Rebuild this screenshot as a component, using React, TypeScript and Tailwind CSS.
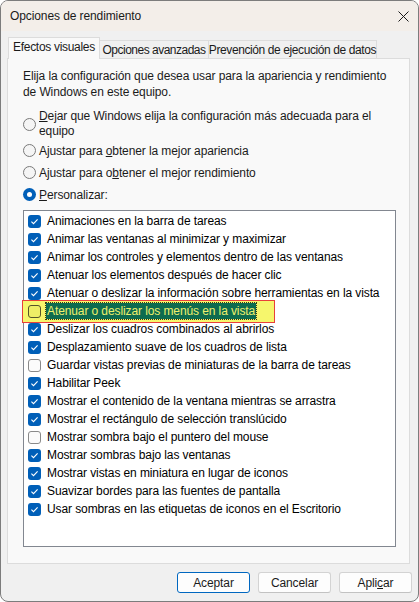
import * as React from "react";

const font = { fontFamily: '"Liberation Sans", Arial, sans-serif', letterSpacing: "-0.1px" };

const items: [string, boolean][] = [
  ["Animaciones en la barra de tareas", true],
  ["Animar las ventanas al minimizar y maximizar", true],
  ["Animar los controles y elementos dentro de las ventanas", true],
  ["Atenuar los elementos después de hacer clic", true],
  ["Atenuar o deslizar la información sobre herramientas en la vista", true],
  ["Atenuar o deslizar los menús en la vista", false],
  ["Deslizar los cuadros combinados al abrirlos", true],
  ["Desplazamiento suave de los cuadros de lista", true],
  ["Guardar vistas previas de miniaturas de la barra de tareas", false],
  ["Habilitar Peek", true],
  ["Mostrar el contenido de la ventana mientras se arrastra", true],
  ["Mostrar el rectángulo de selección translúcido", true],
  ["Mostrar sombra bajo el puntero del mouse", false],
  ["Mostrar sombras bajo las ventanas", true],
  ["Mostrar vistas en miniatura en lugar de iconos", true],
  ["Suavizar bordes para las fuentes de pantalla", true],
  ["Usar sombras en las etiquetas de iconos en el Escritorio", true],
];

const Check = ({ on, hl }: { on: boolean; hl?: boolean }) =>
  on ? (
    <span className="w-[13px] h-[13px] rounded-[3px] bg-[#005fb8] flex items-center justify-center shrink-0">
      <svg width="13" height="13" viewBox="0 0 13 13">
        <path d="M3.4 6.7 L5.5 8.7 L9.6 4.4" fill="none" stroke="#fff" strokeWidth="1.1" />
      </svg>
    </span>
  ) : (
    <span
      className={
        "block w-[13px] h-[13px] rounded-[3px] border shrink-0 " +
        (hl ? "border-[#55552a] bg-[#eeee66]" : "border-[#8a8a8a] bg-[#fbfbfb]")
      }
    />
  );

const Radio = ({ on }: { on?: boolean }) =>
  on ? (
    <span className="w-[13px] h-[13px] rounded-full bg-[#005fb8] flex items-center justify-center shrink-0">
      <span className="w-[5px] h-[5px] rounded-full bg-white" />
    </span>
  ) : (
    <span className="w-[13px] h-[13px] rounded-full border border-[#7a7a7a] bg-[#f5f5f5] shrink-0" />
  );

export default function App() {
  return (
    <div
      className="w-[419px] h-[602px] bg-[#f0f0f0] border border-[#7c7c7c] rounded-[8px] overflow-hidden flex flex-col text-[12px] text-[#1b1b1b] whitespace-nowrap"
      style={font}
    >
      <div className="h-[30px] bg-[#f3eee9] flex items-center justify-between pl-[9px] pr-[9px] shrink-0">
        <span className="text-[12px] text-[#1a1a1a]">Opciones de rendimiento</span>
        <svg width="11" height="11" viewBox="0 0 11 11">
          <path d="M0.5 0.5 L10.5 10.5 M10.5 0.5 L0.5 10.5" stroke="#1a1a1a" strokeWidth="1" />
        </svg>
      </div>

      <div className="flex items-end pt-[6px] pl-[7px] shrink-0 relative z-10">
        <div className="w-[92px] h-[22px] bg-[#f9f9f9] border border-b-0 border-[#dcdcdc] flex items-center justify-center pb-[3px] -mb-px leading-none tracking-[-0.3px]">
          Efectos visuales
        </div>
        <div className="w-[109px] h-[18px] bg-[#f0f0f0] border border-l-0 border-b-0 border-[#dcdcdc] flex items-center justify-center leading-none tracking-[-0.5px]">
          Opciones avanzadas
        </div>
        <div className="w-[168px] h-[18px] bg-[#f0f0f0] border border-l-0 border-b-0 border-[#dcdcdc] flex items-center justify-center leading-none tracking-[-0.4px]">
          Prevención de ejecución de datos
        </div>
      </div>

      <div className="ml-[6px] w-[403px] h-[506px] bg-[#f9f9f9] border border-[#dcdcdc] shrink-0 pl-[15px] pr-[13px] pt-[9px]">
        <p className="leading-[16px]">
          Elija la configuración que desea usar para la apariencia y rendimiento
          <br />
          de Windows en este equipo.
        </p>

        <div className="mt-[9px] flex items-center gap-[3px]">
          <Radio />
          <span className="leading-[15px]">
            <u>D</u>ejar que Windows elija la configuración más adecuada para el
            <br />
            equipo
          </span>
        </div>
        <div className="mt-[4px] flex items-center gap-[3px] h-[15px]">
          <Radio />
          <span>
            Ajustar para <u>o</u>btener la mejor apariencia
          </span>
        </div>
        <div className="mt-[7px] flex items-center gap-[3px] h-[15px]">
          <Radio />
          <span>
            Ajustar para o<u>b</u>tener el mejor rendimiento
          </span>
        </div>
        <div className="mt-[7px] flex items-center gap-[3px] h-[15px]">
          <Radio on />
          <span>
            <u>P</u>ersonalizar:
          </span>
        </div>

        <div className="mt-[8px] w-[373px] h-[337px] bg-white border border-[#828790] pt-[1px] pl-[4px]">
          {items.map(([label, on], i) =>
            i === 5 ? (
              <div key={label} className="relative h-[18px] flex items-center gap-[5px] text-black">
                <div className="absolute left-[-6px] top-[-2px] w-[253px] h-[23px] border border-[#e8403a] bg-[#f6f66c]" />
                <span className="relative flex">
                  <Check on={on} hl />
                </span>
                <span className="relative bg-[#0d6b4f] text-[#eef06c] outline outline-dotted outline-[#3a3a10] px-[1px] leading-[16px]">
                  {label}
                </span>
              </div>
            ) : (
              <div key={label} className="h-[18px] flex items-center gap-[5px] text-black">
                <Check on={on} />
                <span className="pl-[1px]">{label}</span>
              </div>
            )
          )}
        </div>
      </div>

      <div className="flex justify-end gap-[8px] pr-[6px] pt-[8px]">
        <button className="w-[73px] h-[21px] rounded-[3px] border border-[#0067c0] bg-[#fdfdfd] text-[12px] leading-none">
          Aceptar
        </button>
        <button className="w-[73px] h-[21px] rounded-[3px] border border-[#d3d3d3] border-b-[#c2c2c2] bg-[#fdfdfd] text-[12px] leading-none">
          Cancelar
        </button>
        <button className="w-[73px] h-[21px] rounded-[3px] border border-[#d3d3d3] border-b-[#c2c2c2] bg-[#fdfdfd] text-[12px] leading-none">
          Apli<u>c</u>ar
        </button>
      </div>
    </div>
  );
}
